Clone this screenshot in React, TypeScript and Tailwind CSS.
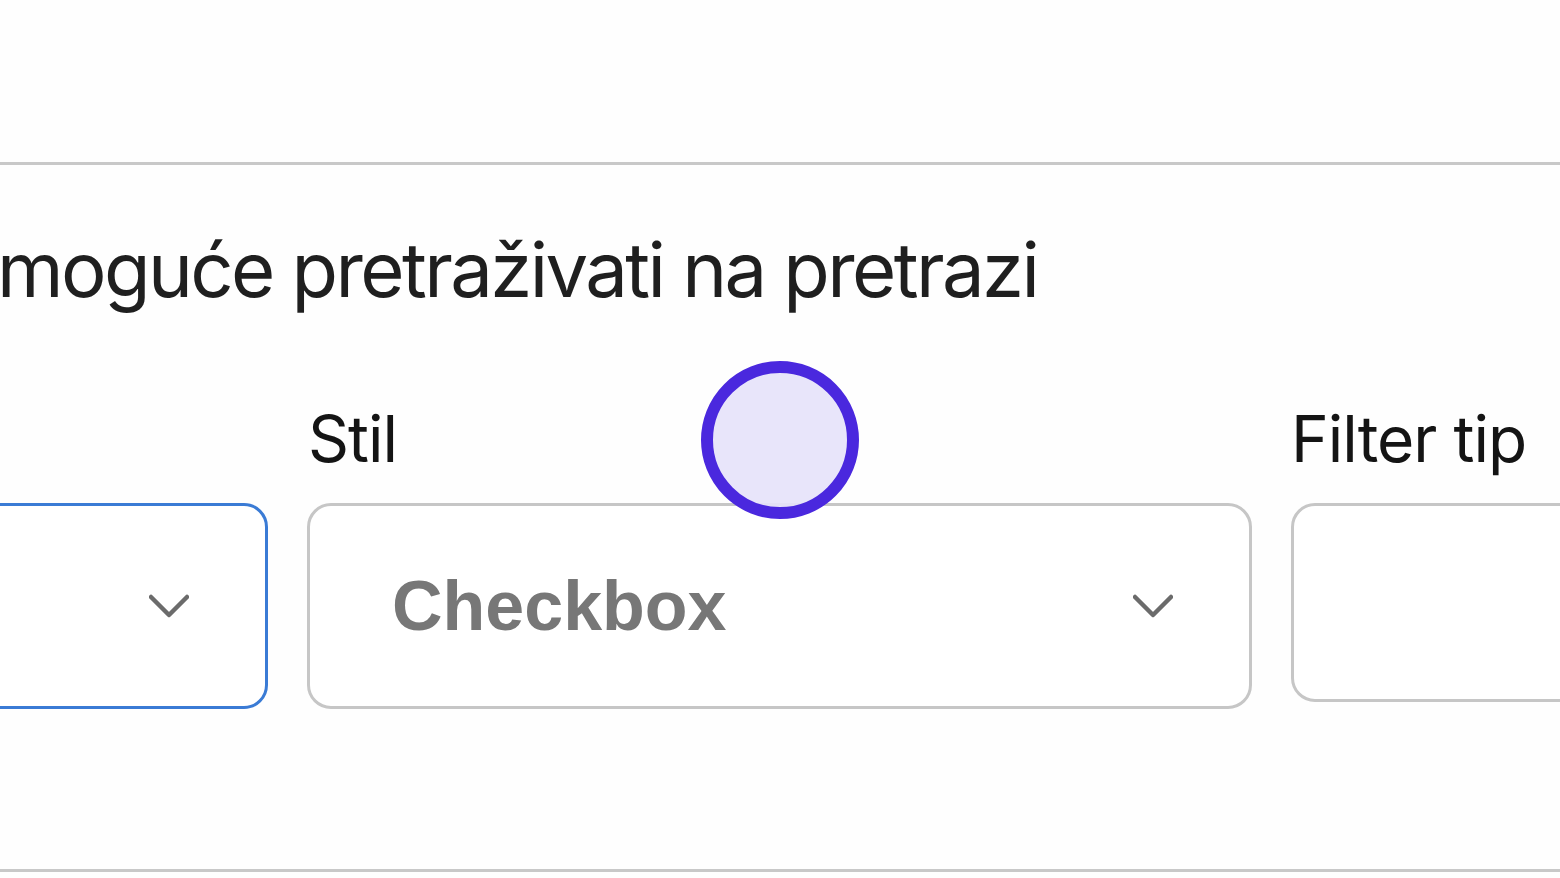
import React from 'react'

function Chevron() {
  return (
    <svg width="40" height="24" viewBox="0 0 40 24" fill="none" className="shrink-0">
      <polyline points="2,3 20,21 38,3" stroke="#6b6b6b" strokeWidth="4.5" strokeLinecap="round" strokeLinejoin="round" />
    </svg>
  )
}

export default function App() {
  return (
    <div className="relative h-[878px] w-[1560px] overflow-hidden bg-[#fefefe] font-['Inter',sans-serif]">
      <div className="h-[162px]" />
      <div className="h-[3px] bg-[#c8c8c8]" />

      <p className="ml-[-3px] mt-[64px] whitespace-nowrap text-[76px] leading-[80px] tracking-[-2.6px] text-[#1f1f1f]">
        moguće pretraživati na pretrazi
      </p>

      {/* filter settings row */}
      <div className="ml-[-132px] mt-[98px] flex items-start gap-[39px]">
        <div className="flex w-[400px] shrink-0 flex-col">
          <div className="h-[64px]" />
          <div className="mt-8 flex h-[206px] items-center justify-end rounded-[24px] border-[3px] border-[#3a7bd5] bg-white pr-[76px]">
            <Chevron />
          </div>
        </div>

        <div className="flex w-[945px] shrink-0 flex-col">
          <span className="pl-[1px] text-[64px] leading-[64px] tracking-[-1px] text-[#141414]">Stil</span>
          <div className="mt-8 flex h-[206px] items-center justify-between rounded-[24px] border-[3px] border-[#c6c6c6] bg-white pl-[82px] pr-[76px]">
            <span className="font-['Liberation_Sans',sans-serif] text-[70px] font-bold leading-none text-[#777777]">
              Checkbox
            </span>
            <Chevron />
          </div>
        </div>

        <div className="flex w-[400px] shrink-0 flex-col">
          <span className="whitespace-nowrap text-[64px] leading-[64px] tracking-[-1px] text-[#141414]">Filter tip</span>
          <div className="mt-8 h-[199px] rounded-[24px] border-[3px] border-[#c6c6c6] bg-white" />
        </div>
      </div>

      <div className="absolute left-0 right-0 top-[869px] h-[3px] bg-[#c8c8c8]" />

      {/* click indicator */}
      <svg className="absolute left-[701px] top-[361px]" width="158" height="158" viewBox="0 0 158 158">
        <circle cx="79" cy="79" r="73" fill="#e6e2fa" fillOpacity="0.9" stroke="#4a28de" strokeWidth="12" />
      </svg>
    </div>
  )
}
